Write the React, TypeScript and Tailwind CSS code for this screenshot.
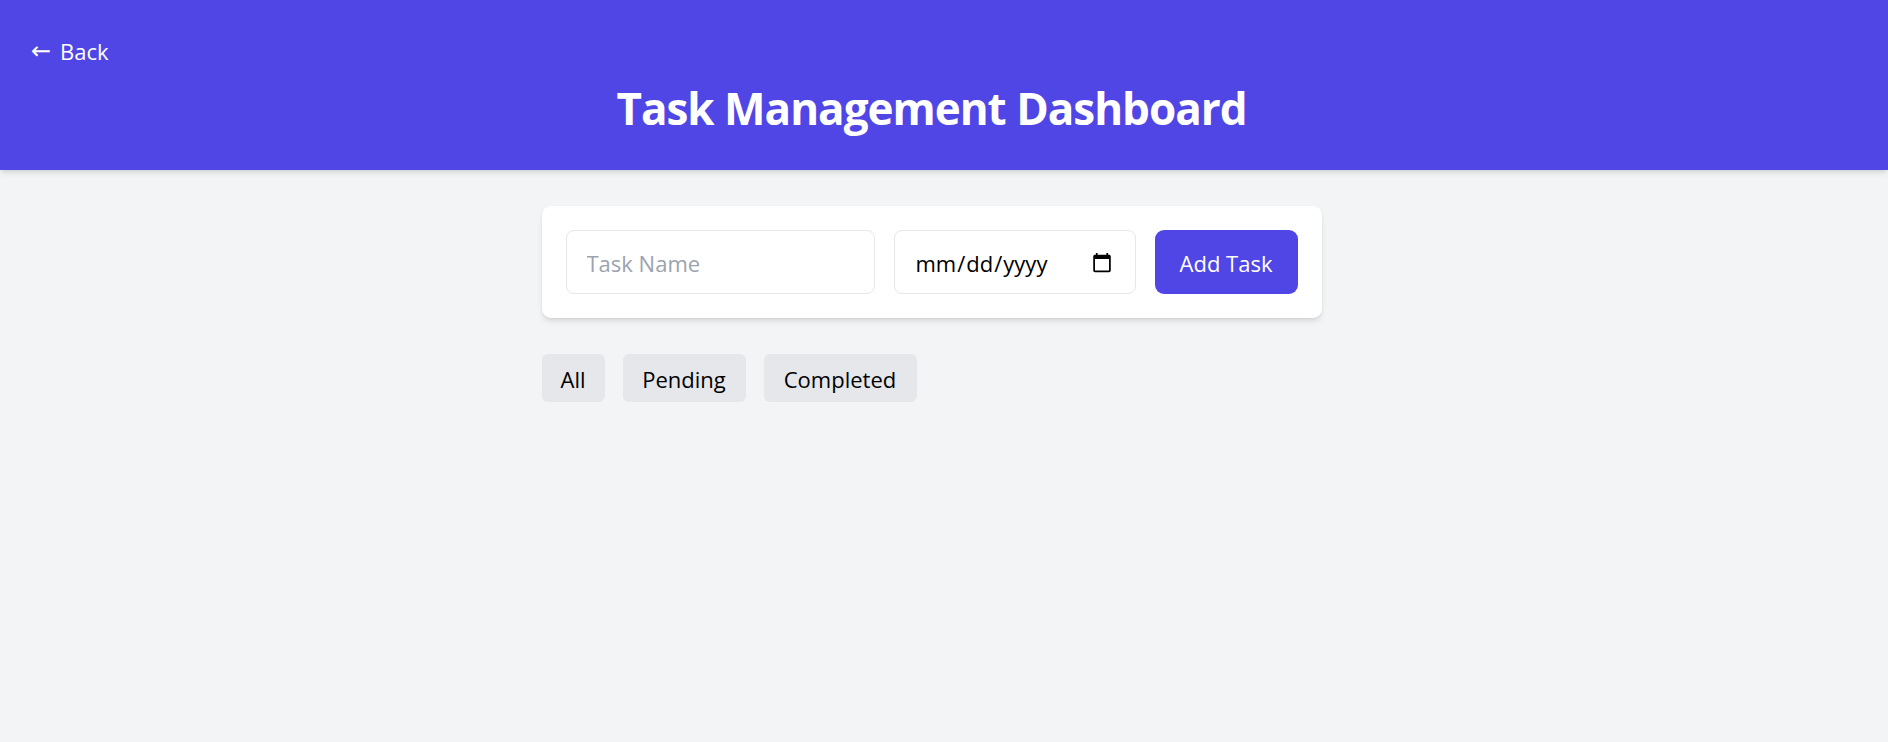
export default function App() {
  return (
    <div
      className="min-h-screen bg-[#f3f4f6]"
      style={{ fontFamily: '"Open Sans", "Noto Sans", sans-serif' }}
    >
      <header className="h-[170px] bg-[#4f46e5] text-white shadow-md">
        <div className="pl-[31px] pt-[36px] flex">
          <a href="#" className="text-[22px] leading-[30px] text-white flex items-center gap-[9px]">
            <span style={{ fontFamily: '"DejaVu Sans", sans-serif' }} className="text-[24px] leading-[30px]">←</span>
            <span>Back</span>
          </a>
        </div>
        <div className="pr-[25px]">
          <h1 className="mt-[14px] text-center font-bold text-[44px] tracking-[-1px] leading-[56px]">
            Task Management Dashboard
          </h1>
        </div>
      </header>
      <main className="pr-[25px] pt-[36px]">
        <div className="mx-auto w-[780px]">
          <div className="bg-white rounded-[9px] shadow-md p-[24px] flex gap-[19px]">
            <input
              type="text"
              placeholder="Task Name"
              className="w-[309px] h-[64px] border border-[#e5e7eb] rounded-[8px] px-[20px] pt-[2px] text-[22px] placeholder:text-[#9ca3af] outline-none"
            />
            <input
              type="date"
              className="w-[242px] h-[64px] border border-[#e5e7eb] rounded-[8px] px-[20px] pt-[2px] text-[22px] text-black outline-none"
            />
            <button className="w-[143px] h-[64px] bg-[#4f46e5] text-white rounded-[9px] text-[22px] pt-[2px]">
              Add Task
            </button>
          </div>
          <div className="mt-[36px] flex gap-[18px]">
            <button className="h-[48px] w-[63px] bg-[#e5e7eb] rounded-[6px] text-[22px] text-black pt-[2px]">
              All
            </button>
            <button className="h-[48px] w-[123px] bg-[#e5e7eb] rounded-[6px] text-[22px] text-black pt-[2px]">
              Pending
            </button>
            <button className="h-[48px] w-[153px] bg-[#e5e7eb] rounded-[6px] text-[22px] text-black pt-[2px]">
              Completed
            </button>
          </div>
        </div>
      </main>
    </div>
  );
}
